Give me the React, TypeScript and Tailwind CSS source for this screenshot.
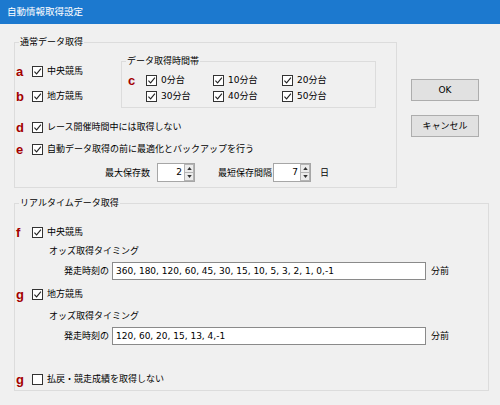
import React from 'react';

const Check: React.FC<{ checked?: boolean }> = ({ checked = true }) => (
  <span className="inline-flex h-[11px] w-[11px] shrink-0 items-center justify-center border border-[#333333] bg-white">
    {checked && (
      <svg viewBox="0 0 9 9" className="h-[9px] w-[9px]">
        <path d="M1.4 4.6 L3.6 6.9 L7.9 1.6" fill="none" stroke="#222222" strokeWidth="1.1" />
      </svg>
    )}
  </span>
);

const Tag: React.FC<{ c: string; w?: string }> = ({ c, w = 'w-[16px]' }) => (
  <span className={`${w} shrink-0 font-[family-name:Liberation_Sans,Arial,sans-serif] text-[13px] font-bold leading-none text-[#a30000]`}>
    {c}
  </span>
);

const CheckRow: React.FC<{ tag: string; label: string; checked?: boolean }> = ({ tag, label, checked = true }) => (
  <div className="flex h-[18px] items-center">
    <Tag c={tag} />
    <Check checked={checked} />
    <span className="ml-[4px] leading-[12px]">{label}</span>
  </div>
);

const Small: React.FC<{ label: string }> = ({ label }) => (
  <div className="flex items-center">
    <Check />
    <span className="ml-[4px] leading-[12px]">{label}</span>
  </div>
);

const Spinner: React.FC<{ value: number }> = ({ value }) => (
  <div className="flex h-[19px] w-[38px] border border-[#a6a6a6] bg-white">
    <div className="flex-1 pr-[2px] text-right leading-[17px]">{value}</div>
    <div className="flex w-[10px] flex-col">
      <div className="flex flex-1 items-center justify-center border border-[#b4b4b4] bg-[#ececec]">
        <svg viewBox="0 0 6 4" className="h-[3px] w-[5px]">
          <path d="M0 4 L3 0 L6 4 Z" fill="#333333" />
        </svg>
      </div>
      <div className="flex flex-1 items-center justify-center border border-t-0 border-[#b4b4b4] bg-[#ececec]">
        <svg viewBox="0 0 6 4" className="h-[3px] w-[5px]">
          <path d="M0 0 L6 0 L3 4 Z" fill="#333333" />
        </svg>
      </div>
    </div>
  </div>
);

const TimingInput: React.FC<{ value: string }> = ({ value }) => (
  <div className="flex h-[18px] items-center pl-[49px]">
    <span className="w-[48px] leading-[12px]">発走時刻の</span>
    <div className="flex h-[18px] w-[314px] items-center border border-[#8a8a8a] bg-white pl-[3px] leading-[12px]">
      {value}
    </div>
    <span className="ml-[5px] leading-[12px]">分前</span>
  </div>
);

const Button: React.FC<{ label: string }> = ({ label }) => (
  <button
    type="button"
    className="flex h-[22px] w-[68px] items-center justify-center border border-[#adadad] bg-[#e1e1e1] leading-[12px]"
  >
    {label}
  </button>
);

export default function App() {
  return (
    <div className="flex h-[405px] w-[500px] flex-col overflow-hidden bg-[#f0f0f0] font-[family-name:DejaVu_Sans,Noto_Sans_CJK_JP,sans-serif] text-[9px] text-black">
      <div className="flex h-[24px] shrink-0 items-center bg-[#1c79cf] pl-[7px] text-[9.5px] text-white">
        自動情報取得設定
      </div>

      <div className="flex items-start pl-[14px] pt-[12px]">
        <fieldset className="w-[383px] border border-[#dcdcdc]">
          <legend className="ml-[4px] px-[1px] leading-[12px]">通常データ取得</legend>

          <div className="flex pl-[1px]">
            <div className="flex w-[105px] flex-col gap-[7px] pt-[14px]">
              <CheckRow tag="a" label="中央競馬" />
              <CheckRow tag="b" label="地方競馬" />
            </div>
            <fieldset className="mt-[7px] w-[255px] border border-[#dcdcdc]">
              <legend className="ml-[4px] px-[1px] leading-[12px]">データ取得時間帯</legend>
              <div className="flex pb-[3px] pl-[6px] pt-[5px]">
                <div className="flex h-[16px] w-[18px] items-center">
                  <Tag c="c" w="w-[18px]" />
                </div>
                <div className="grid grid-cols-[67px_69px_auto] auto-rows-[16px]">
                  <Small label="0分台" />
                  <Small label="10分台" />
                  <Small label="20分台" />
                  <Small label="30分台" />
                  <Small label="40分台" />
                  <Small label="50分台" />
                </div>
              </div>
            </fieldset>
          </div>

          <div className="mt-[10px] flex flex-col gap-[4px] pl-[1px]">
            <CheckRow tag="d" label="レース開催時間中には取得しない" />
            <CheckRow tag="e" label="自動データ取得の前に最適化とバックアップを行う" />
          </div>

          <div className="mb-[5px] mt-[5px] flex h-[19px] items-center pl-[90px]">
            <span className="w-[52px] leading-[12px]">最大保存数</span>
            <Spinner value={2} />
            <span className="ml-[23px] w-[55px] leading-[12px]">最短保存間隔</span>
            <Spinner value={7} />
            <span className="ml-[9px] leading-[12px]">日</span>
          </div>
        </fieldset>

        <div className="ml-[14px] mt-[43px] flex flex-col gap-[14px]">
          <Button label="OK" />
          <Button label="キャンセル" />
        </div>
      </div>

      <div className="pl-[14px] pt-[9px]">
        <fieldset className="w-[475px] border border-[#dcdcdc] pb-[2px]">
          <legend className="ml-[4px] px-[1px] leading-[12px]">リアルタイムデータ取得</legend>

          <div className="mt-[14px] pl-[1px]">
            <CheckRow tag="f" label="中央競馬" />
          </div>
          <div className="mt-[3px] h-[14px] pl-[34px] leading-[14px]">オッズ取得タイミング</div>
          <div className="mt-[4px]">
            <TimingInput value="360, 180, 120, 60, 45, 30, 15, 10, 5, 3, 2, 1, 0,-1" />
          </div>

          <div className="mt-[5px] pl-[1px]">
            <CheckRow tag="g" label="地方競馬" />
          </div>
          <div className="mt-[6px] h-[14px] pl-[34px] leading-[14px]">オッズ取得タイミング</div>
          <div className="mt-[4px]">
            <TimingInput value="120, 60, 20, 15, 13, 4,-1" />
          </div>

          <div className="mt-[25px] pl-[1px]">
            <CheckRow tag="g" label="払戻・競走成績を取得しない" checked={false} />
          </div>
        </fieldset>
      </div>
    </div>
  );
}
